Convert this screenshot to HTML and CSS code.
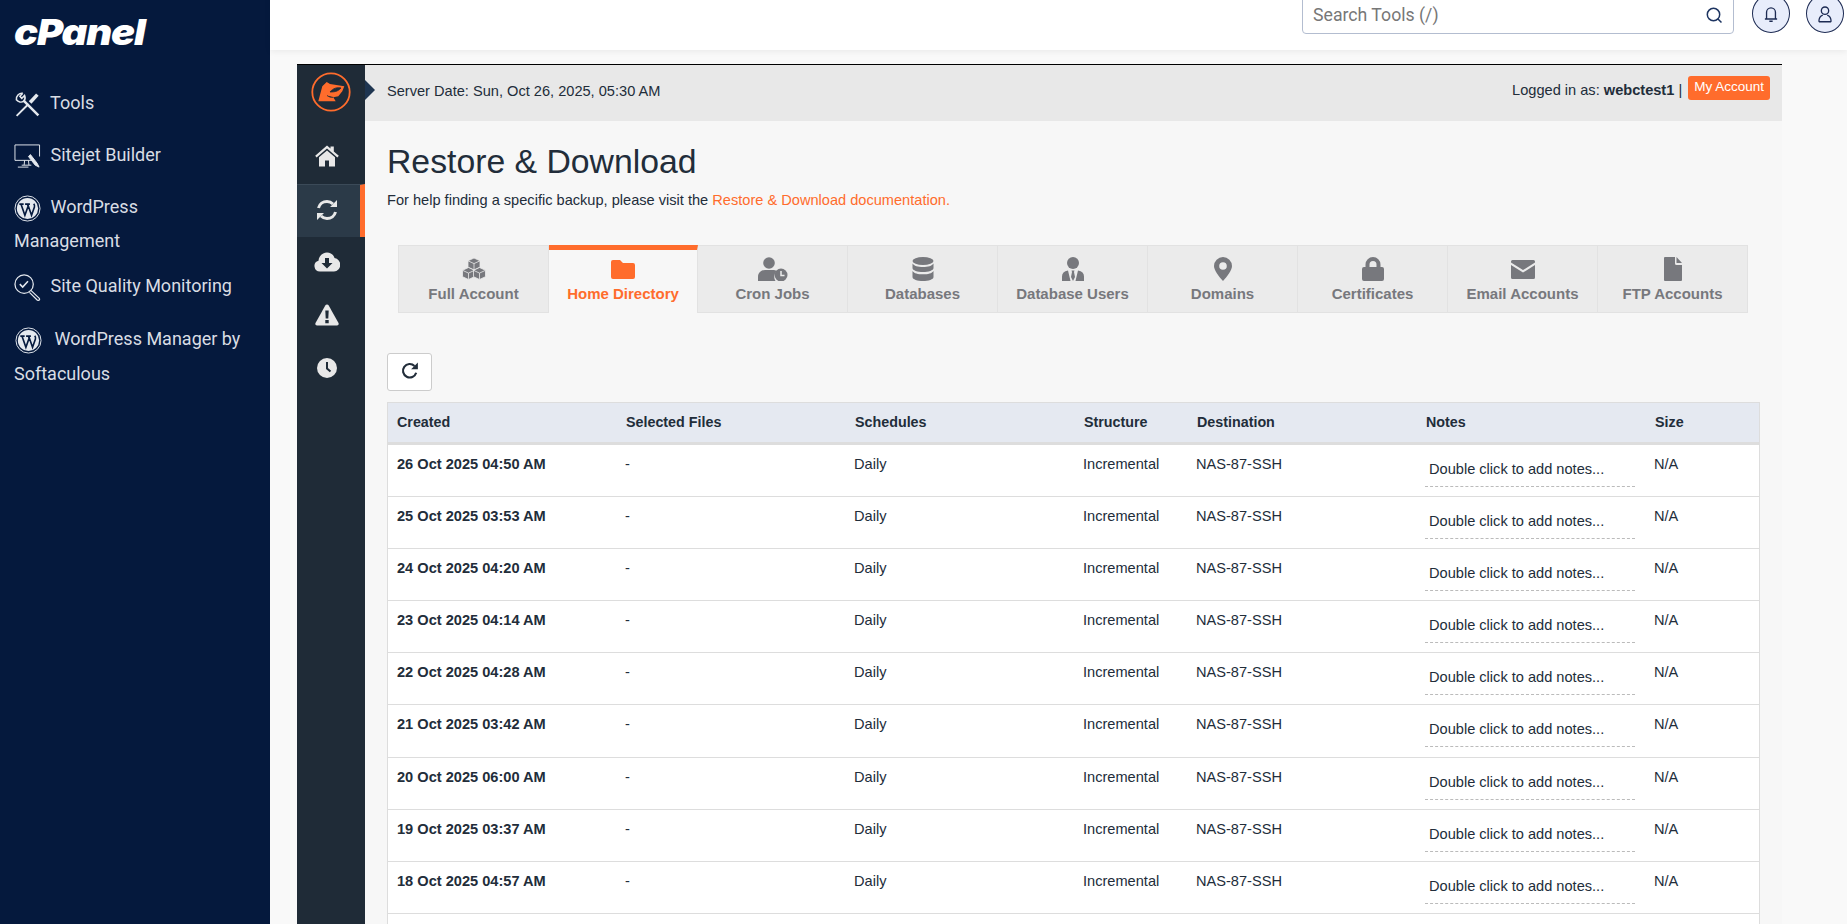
FILE: index.html
```html
<!DOCTYPE html>
<html lang="en">
<head>
  <meta charset="UTF-8">
  <title>Restore &amp; Download - cPanel</title>
  <link rel="stylesheet" href="styles.css">
</head>
<body>
  <svg class="defs" width="0" height="0">
    <symbol id="wp" viewBox="0 0 28 28">
      <circle cx="14" cy="14" r="13" fill="none" stroke="#e4e8ee" stroke-width="1"/>
      <circle cx="14" cy="14" r="11" fill="#e4e8ee"/>
      <path d="M5.500 9.500h4.500M7.300 9.500l4 11.500 3.400-9.500-.8-2M11.500 9.500h5M14.200 9.500l4 11.500 3-8.500c.5-1.500 0-2.500-.7-3.500" fill="none" stroke="#05193d" stroke-width="1.700"/>
    </symbol>
  </svg>

  <aside class="sidebar">
    <div class="logo">cPanel</div>
    <a class="side-link">
      <svg class="side-icon" viewBox="0 0 26 26" fill="none" stroke="#e4e8ee">
        <path d="M9 9l14.500 14.500" stroke-width="2.400"/>
        <path d="M8.500 2.200A5.500 5.500 0 0 0 2.300 8.500 5.500 5.500 0 0 0 9.500 9.800M8.500 2.200L5.700 5l1.800 2 2.700-2.700A5.500 5.500 0 0 1 9.500 9.800" stroke-width="1.500"/>
        <path d="M2.500 24L14 12.500" stroke-width="1.800"/>
        <path d="M15.500 11l7-7.500" stroke-width="3.400"/>
      </svg>
      Tools
    </a>
    <a class="side-link">
      <svg class="side-icon" viewBox="0 0 28 26" fill="none" stroke="#e4e8ee" stroke-width="1">
        <path d="M26.500 13V1H1v16h17M8 22h10M11 17l-.5 5M15 17l.5 5M4 24h11"/>
        <path d="M17 11l7 9 2 4-4-2-7-9z" fill="#e4e8ee"/>
      </svg>
      Sitejet Builder
    </a>
    <a class="side-link wrapped">
      <svg class="side-icon"><use href="#wp"/></svg>
      WordPress Management
    </a>
    <a class="side-link">
      <svg class="side-icon" viewBox="0 0 28 28" fill="none" stroke="#e4e8ee" stroke-width="1.300">
        <circle cx="10.500" cy="10.500" r="9.500"/>
        <path d="M6 10.500l3 3 5.500-6" stroke-width="1.600"/>
        <path d="M17.500 17l8.500 8c1.500 1.500-.5 3-2 2l-8-8"/>
      </svg>
      Site Quality Monitoring
    </a>
    <a class="side-link wrapped long">
      <svg class="side-icon shifted"><use href="#wp"/></svg>
      WordPress Manager by Softaculous
    </a>
  </aside>

  <div class="main">
    <header class="topbar">
      <div class="search">
        <span class="search-text">Search Tools (/)</span>
        <svg class="search-icon" viewBox="0 0 18 18" fill="none" stroke="#1d3461" stroke-width="1.500">
          <circle cx="8.500" cy="8.500" r="6.200"/>
          <path d="M13 13l3.500 3.500"/>
        </svg>
      </div>
      <div class="round-btn">
        <svg viewBox="0 0 18 18" width="20" height="20" fill="none" stroke="#1d2b53" stroke-width="1.200">
          <path d="M5 13V7.500a4 4 0 0 1 8 0V13M3.500 13.500h11M7.500 15.500h3"/>
        </svg>
      </div>
      <div class="round-btn">
        <svg viewBox="0 0 18 18" width="20" height="20" fill="none" stroke="#1d2b53" stroke-width="1.200">
          <circle cx="9" cy="6" r="3.300"/>
          <path d="M3.500 16c0-3.500 2-5.500 3.500-6M14.500 16c0-3.500-2-5.500-3.500-6M3.500 16h11"/>
        </svg>
      </div>
    </header>

    <div class="panel">
      <nav class="panel-nav">
        <div class="brand">
          <svg viewBox="0 0 40 40" width="40" height="40">
            <circle cx="20" cy="20" r="18.700" fill="none" stroke="#ff6c2c" stroke-width="1.800"/>
            <path d="M7.300 29.300l4-15 4.400-4.300 3.300 2 14.300 2.300-2 5-4 5-5 1 2.400 4z" fill="#ff6c2c"/>
            <path d="M19 20c3-4 8-5 11-4-3 3-5 4-11 4zM16 23.500c2 1.500 4 2 6.300 1.800" fill="#1f2b37" stroke="#1f2b37" stroke-width=".8"/>
          </svg>
        </div>
        <a class="nav-item">
          <svg viewBox="0 0 24 22" width="24" height="22" fill="#e8e8e8">
            <path d="M12 .5l3.500 3V1.500h3.300v5l5 4.300-1.400 1.600L12 3.500 1.600 12.400.2 10.800z"/>
            <path d="M12 5.500l8 6.800V21.500h-6v-6h-4v6H4v-9.200z"/>
          </svg>
        </a>
        <a class="nav-item active">
          <svg viewBox="0 0 22 22" width="22" height="22" fill="none" stroke="#e8e8e8" stroke-width="3">
            <path d="M2.500 9C3.500 5 7 2.500 11 2.500c2.500 0 4.500 1 6 2.500"/>
            <path d="M19.500 13c-1 4-4.500 6.500-8.500 6.500-2.500 0-4.500-1-6-2.500"/>
            <path d="M14 8h7V1zM8 14H1v7z" fill="#e8e8e8" stroke="none"/>
          </svg>
        </a>
        <a class="nav-item">
          <svg viewBox="0 0 26 20" width="26" height="20" fill="#e8e8e8">
            <path d="M6 19.500a5.500 5.500 0 0 1-1.500-10.800C5 3.500 9 .5 13 .5c3.500 0 6.500 2 7.500 5.500A6.800 6.800 0 0 1 20 19.500z"/>
            <path d="M11 6h4v5h3.500L13 16.500 7.500 11H11z" fill="#1f2b37"/>
          </svg>
        </a>
        <a class="nav-item">
          <svg viewBox="0 0 24 22" width="24" height="22" fill="#e8e8e8">
            <path d="M12 .5c.8 0 1.300.4 1.700 1l9.800 17.500c.6 1.200-.2 2.500-1.500 2.500H2c-1.300 0-2.100-1.300-1.500-2.500L10.300 1.500c.4-.6.900-1 1.700-1z"/>
            <path d="M10.300 6.500h3.400l-.4 8h-2.600zM10.300 16h3.400v3.200h-3.400z" fill="#1f2b37"/>
          </svg>
        </a>
        <a class="nav-item">
          <svg viewBox="0 0 20 20" width="20" height="20">
            <circle cx="10" cy="10" r="10" fill="#e8e8e8"/>
            <path d="M10 4v6.500l3.500 3" fill="none" stroke="#1f2b37" stroke-width="2"/>
          </svg>
        </a>
      </nav>

      <div class="panel-body">
        <div class="status-bar">
          <span>Server Date: Sun, Oct 26, 2025, 05:30 AM</span>
          <div class="account">
            <span class="account-name">Logged in as: <b>webctest1</b> |</span>
            <a class="account-btn">My Account</a>
          </div>
        </div>

        <div class="content">
          <h1>Restore &amp; Download</h1>
          <p class="help">For help finding a specific backup, please visit the <a>Restore &amp; Download documentation.</a></p>

          <div class="tabs">
            <a class="tab">
              <svg viewBox="0 0 24 24" width="24" height="24" fill="#77787d" stroke="#ebebeb" stroke-width=".8">
                <path d="M12 1l6 2.800v6.400l-6 2.800-6-2.800V3.800z"/>
                <path d="M6.500 10.500l6 2.800v6.400l-6 2.800-6-2.800v-6.400z"/>
                <path d="M17.500 10.500l6 2.800v6.400l-6 2.800-6-2.800v-6.400z"/>
                <path d="M6 3.800l6 2.800 6-2.800M12 6.600V13M.5 13.300l6 2.800 6-2.800M6.500 16.100v6.400M11.500 13.300l6 2.800 6-2.800M17.500 16.100v6.400" fill="none"/>
              </svg>
              <span>Full Account</span>
            </a>
            <a class="tab active">
              <svg viewBox="0 0 24 24" width="24" height="24" fill="#ff6c2c">
                <path d="M0 5a2 2 0 0 1 2-2h7l3 3h10a2 2 0 0 1 2 2v12a2 2 0 0 1-2 2H2a2 2 0 0 1-2-2z"/>
              </svg>
              <span>Home Directory</span>
            </a>
            <a class="tab">
              <svg viewBox="0 0 30 24" width="30" height="24" fill="#77787d">
                <circle cx="11" cy="6" r="5.800"/>
                <path d="M0 24v-4c0-4 3-7 7-7h8c1.500 0 2.500.3 3.500 1a8 8 0 0 0-1 10z"/>
                <circle cx="23" cy="18" r="6.500"/>
                <path d="M23 14v4.500h3.500" fill="none" stroke="#ebebeb" stroke-width="1.500"/>
              </svg>
              <span>Cron Jobs</span>
            </a>
            <a class="tab">
              <svg viewBox="0 0 22 24" width="22" height="24" fill="#77787d">
                <ellipse cx="11" cy="4" rx="10.500" ry="4"/>
                <path d="M.5 6.500C2 9 6 10 11 10s9-1 10.500-3.500V11c0 2.500-5 4-10.500 4S.5 13.500.5 11z"/>
                <path d="M.5 14C2 16.500 6 17.300 11 17.300s9-.8 10.500-3.300v6c0 2.500-5 4-10.500 4S.5 22.500.5 20z"/>
              </svg>
              <span>Databases</span>
            </a>
            <a class="tab">
              <svg viewBox="0 0 22 24" width="22" height="24" fill="#77787d">
                <circle cx="11" cy="6" r="6"/>
                <path d="M0 24v-4.500c0-3.500 2-5.500 6-6l2.500 10.500zM22 24v-4.500c0-3.500-2-5.500-6-6L13.500 24zM9.500 13.500h3l-.5 1.500 1 5-2 4-2-4 1-5z"/>
              </svg>
              <span>Database Users</span>
            </a>
            <a class="tab">
              <svg viewBox="0 0 18 24" width="18" height="24" fill="#77787d">
                <path fill-rule="evenodd" d="M9 0a9 9 0 0 1 9 9c0 4.500-5 10.500-9 15C5 19.500 0 13.500 0 9a9 9 0 0 1 9-9zm0 5.200a3.800 3.800 0 1 0 0 7.600 3.800 3.800 0 0 0 0-7.600z"/>
              </svg>
              <span>Domains</span>
            </a>
            <a class="tab">
              <svg viewBox="0 0 22 24" width="22" height="24" fill="#77787d">
                <path fill-rule="evenodd" d="M3.500 10V7.500a7.500 7.500 0 0 1 15 0V10H20a2 2 0 0 1 2 2v10a2 2 0 0 1-2 2H2a2 2 0 0 1-2-2V12a2 2 0 0 1 2-2zm4 0h7V7.500a3.500 3.500 0 0 0-7 0z"/>
              </svg>
              <span>Certificates</span>
            </a>
            <a class="tab">
              <svg viewBox="0 0 24 24" width="24" height="24" fill="#77787d">
                <path d="M1.500 3h21A1.500 1.500 0 0 1 24 4.500v1L12 13 0 5.500v-1A1.500 1.500 0 0 1 1.500 3z"/>
                <path d="M0 8l12 7.500L24 8v12.500a1.500 1.500 0 0 1-1.500 1.500h-21A1.500 1.500 0 0 1 0 20.500z"/>
              </svg>
              <span>Email Accounts</span>
            </a>
            <a class="tab">
              <svg viewBox="0 0 18 24" width="18" height="24" fill="#77787d">
                <path d="M1 0h10v6.500a1.500 1.500 0 0 0 1.500 1.500H18v15a1 1 0 0 1-1 1H1a1 1 0 0 1-1-1V1a1 1 0 0 1 1-1z"/>
                <path d="M12.500 0L18 6h-5.500z"/>
              </svg>
              <span>FTP Accounts</span>
            </a>
          </div>

          <button class="refresh">
            <svg viewBox="0 0 16 16" width="18" height="18" fill="none" stroke="#222d3a" stroke-width="1.900">
              <path d="M13.500 9.500A6 6 0 1 1 12 3.500"/>
              <path d="M15 .5v6H9z" fill="#222d3a" stroke="none"/>
            </svg>
          </button>

          <table class="backups">
            <thead>
              <tr>
                <th class="col-wide">Created</th>
                <th class="col-wide">Selected Files</th>
                <th class="col-wide">Schedules</th>
                <th class="col-narrow">Structure</th>
                <th class="col-wide">Destination</th>
                <th class="col-wide">Notes</th>
                <th>Size</th>
              </tr>
            </thead>
            <tbody>
              <tr><td><b>26 Oct 2025 04:50 AM</b></td><td>-</td><td>Daily</td><td>Incremental</td><td>NAS-87-SSH</td><td><div class="notes">Double click to add notes...</div></td><td>N/A</td></tr>
              <tr><td><b>25 Oct 2025 03:53 AM</b></td><td>-</td><td>Daily</td><td>Incremental</td><td>NAS-87-SSH</td><td><div class="notes">Double click to add notes...</div></td><td>N/A</td></tr>
              <tr><td><b>24 Oct 2025 04:20 AM</b></td><td>-</td><td>Daily</td><td>Incremental</td><td>NAS-87-SSH</td><td><div class="notes">Double click to add notes...</div></td><td>N/A</td></tr>
              <tr><td><b>23 Oct 2025 04:14 AM</b></td><td>-</td><td>Daily</td><td>Incremental</td><td>NAS-87-SSH</td><td><div class="notes">Double click to add notes...</div></td><td>N/A</td></tr>
              <tr><td><b>22 Oct 2025 04:28 AM</b></td><td>-</td><td>Daily</td><td>Incremental</td><td>NAS-87-SSH</td><td><div class="notes">Double click to add notes...</div></td><td>N/A</td></tr>
              <tr><td><b>21 Oct 2025 03:42 AM</b></td><td>-</td><td>Daily</td><td>Incremental</td><td>NAS-87-SSH</td><td><div class="notes">Double click to add notes...</div></td><td>N/A</td></tr>
              <tr><td><b>20 Oct 2025 06:00 AM</b></td><td>-</td><td>Daily</td><td>Incremental</td><td>NAS-87-SSH</td><td><div class="notes">Double click to add notes...</div></td><td>N/A</td></tr>
              <tr><td><b>19 Oct 2025 03:37 AM</b></td><td>-</td><td>Daily</td><td>Incremental</td><td>NAS-87-SSH</td><td><div class="notes">Double click to add notes...</div></td><td>N/A</td></tr>
              <tr><td><b>18 Oct 2025 04:57 AM</b></td><td>-</td><td>Daily</td><td>Incremental</td><td>NAS-87-SSH</td><td><div class="notes">Double click to add notes...</div></td><td>N/A</td></tr>
              <tr class="empty-row"><td colspan="7"></td></tr>
            </tbody>
          </table>
        </div>
      </div>
    </div>
  </div>
</body>
</html>
```

FILE: styles.css
```css
* {
  box-sizing: border-box;
}

html, body {
  height: 100%;
}

body {
  margin: 0;
  display: flex;
  overflow: hidden;
  background-color: #f9f9f9;
  color: #222d3a;
  font-family: "Liberation Sans", Arial, sans-serif;
  font-size: 14.6px;
}

.defs {
  display: none;
}

/* left sidebar */
.sidebar {
  width: 270px;
  flex-shrink: 0;
  padding: 14px 24px 0 14px;
  background-color: #05193d;
  color: #d9dde4;
  font-family: Roboto, sans-serif;
  font-size: 18px;
}

.logo {
  height: 36px;
  margin-bottom: 36px;
  color: #fff;
  font-family: Inter, sans-serif;
  font-size: 36px;
  font-weight: 900;
  font-style: italic;
  line-height: 36px;
  letter-spacing: -1px;
  transform: scaleX(1.11);
  transform-origin: left;
}

.side-link {
  display: block;
  margin-bottom: 18px;
  line-height: 34px;
}

.side-link.wrapped {
  margin-bottom: 11px;
}

.side-link.long {
  line-height: 35px;
}

.side-icon {
  width: 27px;
  height: 27px;
  margin-right: 5px;
  vertical-align: middle;
}

.side-icon.shifted {
  margin-left: 1px;
  margin-right: 8px;
}

/* top bar */
.main {
  flex: 1;
  min-width: 0;
}

.topbar {
  height: 56px;
  margin-top: -6px;
  padding-right: 3px;
  display: flex;
  justify-content: flex-end;
  background-color: #fff;
  box-shadow: 0 2px 6px rgba(0, 0, 0, 0.06);
}

.search {
  width: 432px;
  height: 40px;
  margin-right: 2px;
  padding: 0 10px;
  display: flex;
  align-items: center;
  justify-content: space-between;
  border: 1px solid #b3bdd0;
  border-radius: 4px;
}

.search-text {
  padding-top: 2px;
  color: #777;
  font-family: Roboto, sans-serif;
  font-size: 17.700px;
}

.search-icon {
  width: 18px;
  height: 18px;
  margin-top: 2px;
}

.round-btn {
  width: 38px;
  height: 39px;
  margin-left: 16px;
  display: flex;
  align-items: center;
  justify-content: center;
  border: 1px solid #1d2b53;
  border-radius: 50%;
  background-color: #e8edfb;
}

/* backup panel */
.panel {
  width: 1485px;
  height: 900px;
  margin: 14px 0 0 27px;
  display: flex;
  border-top: 1px solid #000;
}

.panel-nav {
  width: 68px;
  flex-shrink: 0;
  background-color: #1f2b37;
}

.brand {
  height: 66px;
  padding: 7px 0 0 14px;
}

.nav-item {
  height: 53px;
  padding: 0 8px 3px 0;
  display: flex;
  align-items: center;
  justify-content: center;
}

.nav-item.active {
  padding-right: 3px;
  border-top: 1px solid #3b4a58;
  border-right: 5px solid #ff6c2c;
  background-color: #2b3a48;
}

.panel-body {
  flex: 1;
  min-width: 0;
  background-color: #f7f7f7;
}

.status-bar {
  position: relative;
  height: 56px;
  padding: 11px 12px 0 22px;
  display: flex;
  justify-content: space-between;
  background-color: #e8e8e8;
  line-height: 30px;
}

.status-bar::before {
  content: "";
  position: absolute;
  left: 0;
  top: 15px;
  border-left: 10px solid #1f3550;
  border-top: 10px solid transparent;
  border-bottom: 10px solid transparent;
}

.account {
  display: flex;
  gap: 6px;
}

.account-name {
  line-height: 28px;
}

.account-btn {
  height: 24px;
  padding: 0 6px;
  background-color: #ff6c2c;
  border-radius: 3px;
  color: #fff;
  font-size: 13.500px;
  line-height: 22px;
}

.content {
  padding: 0 22px;
}

h1 {
  margin: 20px 0 0;
  font-size: 33.750px;
  font-weight: 400;
  line-height: 40px;
}

.help {
  margin: 9px 0 0;
  line-height: 21px;
}

.help a {
  color: #ff6c2c;
}

.tabs {
  margin: 34px 0 0 11px;
  display: flex;
  height: 68px;
}

.tab {
  width: 150px;
  padding-top: 11px;
  display: flex;
  flex-direction: column;
  align-items: center;
  gap: 3px;
  background-color: #ebebeb;
  border: 1px solid #e2e2e2;
  border-left-width: 0;
  color: #77787d;
  font-size: 15px;
  font-weight: 700;
  line-height: 20px;
}

.tab:first-child {
  width: 151px;
  border-left-width: 1px;
}

.tab.active {
  width: 149px;
  padding-top: 7px;
  background-color: #f7f7f7;
  border-top: 5px solid #ff6c2c;
  border-bottom: 0;
  color: #ff6c2c;
}

.refresh {
  width: 45px;
  height: 38px;
  margin-top: 40px;
  padding: 0;
  display: block;
  background-color: #fff;
  border: 1px solid #ccc;
  border-radius: 3px;
}

.backups {
  width: 1373px;
  margin-top: 11px;
  table-layout: fixed;
  border-collapse: separate;
  border-spacing: 0;
  border-left: 1px solid #ddd;
  border-right: 1px solid #ddd;
  background-color: #fff;
}

.backups th {
  height: 43px;
  padding: 0 9px 2px;
  background-color: #e5e9f1;
  border-top: 1px solid #ddd;
  border-bottom: 3px solid #ddd;
  font-size: 14.300px;
  text-align: left;
}

.col-wide {
  width: 229px;
}

.col-narrow {
  width: 113px;
}

.backups td {
  padding: 8px 8px 9.100px;
  border-bottom: 1px solid #ddd;
  vertical-align: top;
  line-height: 22px;
}

.backups td:first-child {
  padding-left: 9px;
}

.notes {
  height: 34px;
  width: 210px;
  padding: 6px 4px 0;
  border-bottom: 1px dashed #bbb;
  line-height: 20px;
}

.empty-row td {
  height: 52px;
}
```
